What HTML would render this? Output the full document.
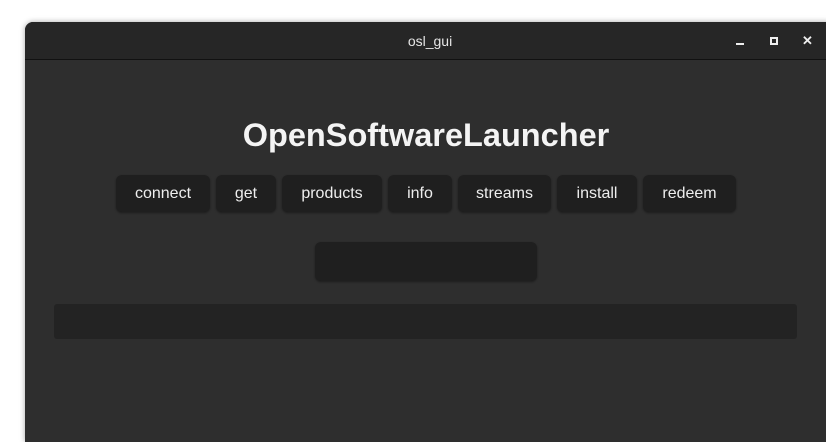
<!DOCTYPE html>
<html><head><style>
body{margin:0;width:826px;height:432px;background:#fff;overflow:hidden;font-family:"Liberation Sans",sans-serif;position:relative}
.win{position:absolute;left:25px;top:22px;width:810px;height:420px;background:#2e2e2e;border-radius:8px 8px 0 0;box-shadow:0 0 6px rgba(0,0,0,.35);overflow:hidden}
.tb{position:absolute;left:0;top:0;width:100%;height:37px;background:#262626;border-bottom:1px solid #111;color:#e6e6e6;font-size:14px;text-align:center;line-height:38px}
.tb span{position:absolute;top:0;color:#eee;font-size:13px;font-weight:bold}
h1{position:absolute;left:0;width:802px;top:95px;margin:0;text-align:center;color:#f4f4f4;font-size:32.5px;font-weight:bold}
.b{position:absolute;top:153px;height:37px;background:#1f1f1f;border-radius:6px;color:#eee;font-size:16px;line-height:37px;text-align:center;box-shadow:0 1px 2px rgba(0,0,0,.4)}
</style></head><body>
<div class="win">
<div class="tb">osl_gui
<span style="left:711px;width:8px;height:2px;background:#eee;top:21px"></span>
<span style="left:745px;width:4px;height:4px;border:2px solid #eee;top:15px"></span>
<span style="left:777px;line-height:38px">✕</span>
</div>
<h1>OpenSoftwareLauncher</h1>
<div class="b" style="left:91px;width:94px">connect</div>
<div class="b" style="left:191px;width:60px">get</div>
<div class="b" style="left:257px;width:100px">products</div>
<div class="b" style="left:363px;width:64px">info</div>
<div class="b" style="left:433px;width:93px">streams</div>
<div class="b" style="left:532px;width:80px">install</div>
<div class="b" style="left:618px;width:93px">redeem</div>
<div class="b" style="left:290px;width:222px;top:220px;height:39px"></div>
<div style="position:absolute;left:29px;top:282px;width:743px;height:35px;background:#232323;border-radius:3px"></div>
</div>
</body></html>
